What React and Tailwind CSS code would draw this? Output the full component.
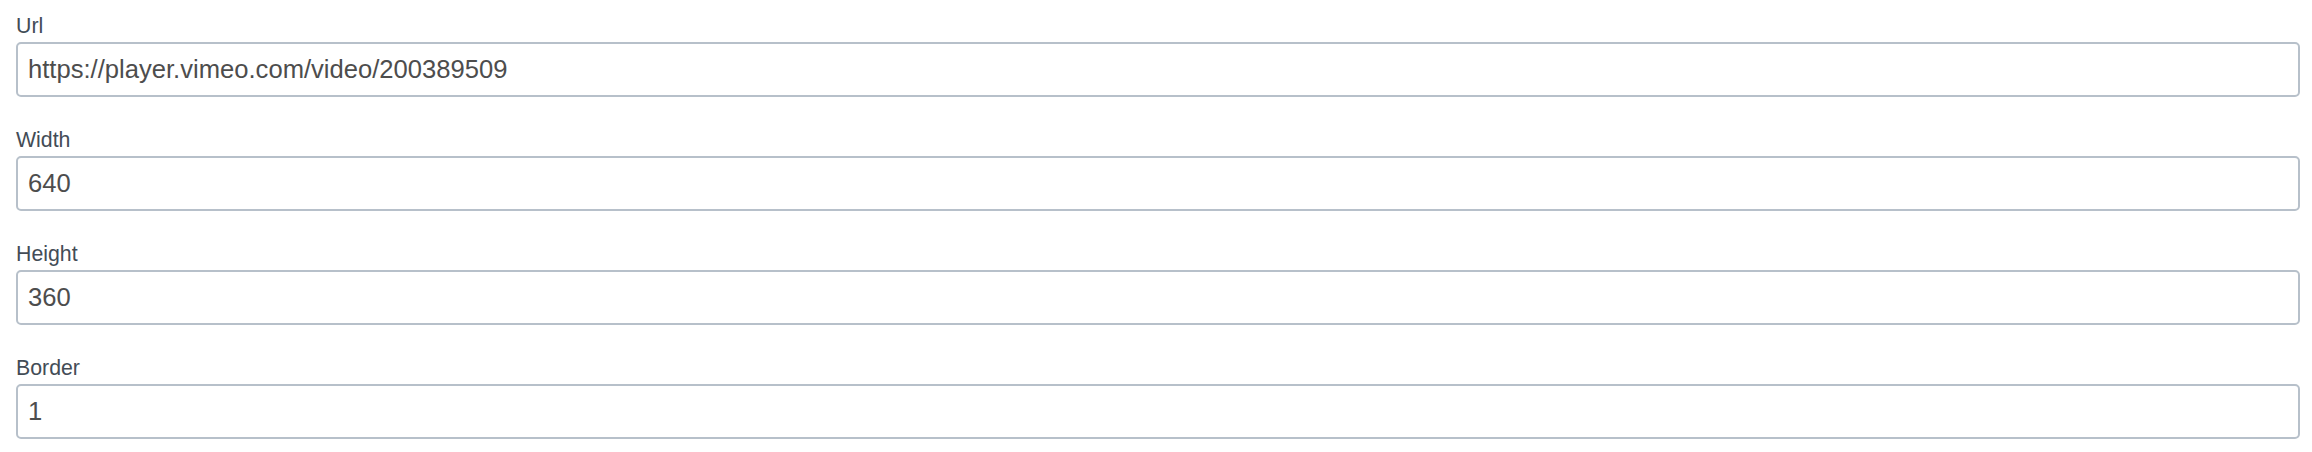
import React from "react";

const fields = [
  { label: "Url", value: "https://player.vimeo.com/video/200389509" },
  { label: "Width", value: "640" },
  { label: "Height", value: "360" },
  { label: "Border", value: "1" },
];

export default function App() {
  return (
    <div
      className="w-[2312px] h-[452px] bg-white pl-4 pr-3 pt-[10px] flex flex-col gap-[27px]"
      style={{ fontFamily: '"Liberation Sans", Arial, Helvetica, sans-serif' }}
    >
      {fields.map((f) => (
        <div key={f.label} className="flex flex-col">
          <label className="block text-[21.3px] leading-[32px] text-[#434c56]">
            {f.label}
          </label>
          <input
            type="text"
            readOnly
            value={f.value}
            className="block w-full h-[55px] border-2 border-[#b7c0ca] rounded-[5px] px-[10px] text-[25.6px] text-[#4d4d4d] bg-white outline-none"
            style={{ fontFamily: '"Liberation Sans", Arial, Helvetica, sans-serif' }}
          />
        </div>
      ))}
    </div>
  );
}
